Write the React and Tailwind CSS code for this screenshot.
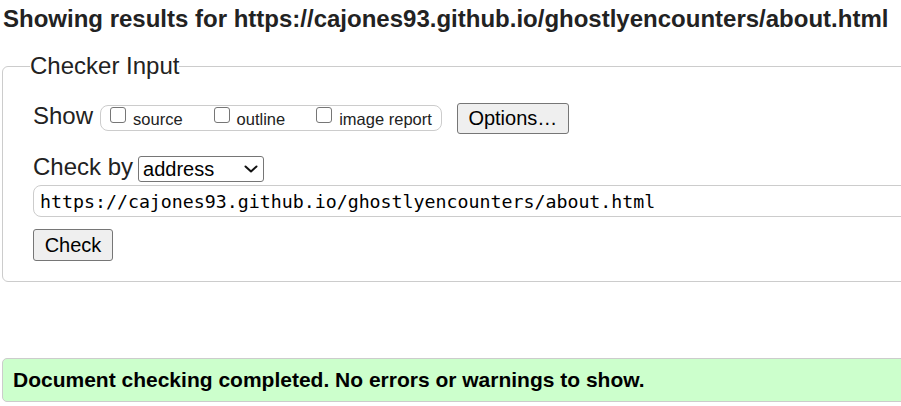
const url = "https://cajones93.github.io/ghostlyencounters/about.html";

const options = [
  { id: "source", label: "source", gap: "ml-0" },
  { id: "outline", label: "outline", gap: "ml-[31px]" },
  { id: "image", label: "image report", gap: "ml-[31px]" },
];

function Box({ id, label, gap }) {
  return (
    <label htmlFor={id} className={`flex items-start ${gap}`}>
      <input
        id={id}
        type="checkbox"
        className="appearance-none mt-[1px] w-[16px] h-[16px] rounded-[3px] border border-[#767676] bg-white"
      />
      <span className="ml-[7px] mt-[4px] text-[16.5px] leading-[19px]">{label}</span>
    </label>
  );
}

export default function App() {
  return (
    <div className="w-full h-[406px] overflow-hidden bg-white text-[#222] font-['Liberation_Sans',Arial,sans-serif]">
      <h2 className="pt-[5px] pl-[3px] text-[24px] leading-[28px] font-bold whitespace-nowrap">
        Showing results for {url}
      </h2>

      <fieldset className="mt-[19px] ml-[2px] w-[960px] border border-[#cccccc] rounded-[6px] pl-[30px] pb-[20px]">
        <legend className="-ml-[3px] text-[24px] leading-[28px]">Checker Input</legend>

        <div className="flex items-start mt-[20px] h-[34px]">
          <span className="mt-[2px] text-[24px] leading-[28px]">Show</span>
          <div className="flex items-start ml-[7px] mt-[5px] h-[26px] pl-[9px] pr-[9px] border border-[#cccccc] rounded-[8px]">
            {options.map((o) => (
              <Box key={o.id} {...o} />
            ))}
          </div>
          <button className="ml-[15px] mt-[3px] w-[112px] h-[31px] bg-[#efefef] border border-[#767676] rounded-[3px] text-[20px] leading-[23px] text-black">
            Options…
          </button>
        </div>

        <div className="flex items-start mt-[19px] h-[29px]">
          <span className="text-[24px] leading-[28px]">Check by</span>
          <div className="flex items-center justify-between ml-[5px] mt-[3px] w-[126px] h-[26px] pl-[4px] pr-[5px] border border-[#767676] rounded-[3px] bg-white">
            <span className="text-[20px] leading-[23px] text-black">address</span>
            <svg width="14" height="8" viewBox="0 0 14 8" fill="none">
              <path d="M1.5 1.5 L7 6.5 L12.5 1.5" stroke="#111" strokeWidth="2" strokeLinecap="round" strokeLinejoin="round" />
            </svg>
          </div>
        </div>

        <div className="mt-[3px] h-[32px] flex items-center pt-[2px] pl-[6px] border border-[#cccccc] rounded-[8px] bg-white">
          <span className="font-['DejaVu_Sans_Mono',monospace] text-[18.25px] leading-[22px] text-black whitespace-nowrap">
            {url}
          </span>
        </div>

        <button className="mt-[12px] w-[80px] h-[32px] bg-[#efefef] border border-[#767676] rounded-[3px] text-[20px] leading-[23px] text-black">
          Check
        </button>
      </fieldset>

      <div className="mt-[76px] ml-[2px] w-[960px] h-[44px] flex items-center pl-[10px] bg-[#ccffcc] border border-[#cccccc] rounded-[5px]">
        <span className="text-[21px] leading-[24px] font-bold text-black whitespace-nowrap">
          Document checking completed. No errors or warnings to show.
        </span>
      </div>
    </div>
  );
}
